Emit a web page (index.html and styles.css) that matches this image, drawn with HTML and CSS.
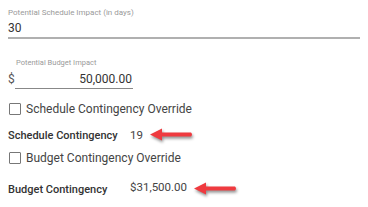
FILE: index.html
```html
<!DOCTYPE html>
<html lang="en">
<head>
  <meta charset="UTF-8" />
  <title>Contingency</title>
  <link rel="stylesheet" href="styles.css">
</head>
<body>
  <div class="form">
    <div class="field wide">
      <label>Potential Schedule Impact (in days)</label>
      <div class="value">30</div>
    </div>

    <div class="field money">
      <label>Potential Budget Impact</label>
      <div class="money-row">
        <span class="prefix">$</span>
        <div class="value right">50,000.00</div>
      </div>
    </div>

    <div class="check first"><span class="box"></span>Schedule Contingency Override</div>

    <div class="stat">
      <span class="stat-label">Schedule Contingency</span>
      <span class="stat-value">19</span>
      <svg class="arrow" width="46" height="15" viewBox="0 0 46 15">
        <path d="M1 6.5 L13 0.5 L13 4.5 L42 4.5 Q44 6.5 42 8.5 L13 8.5 L13 12.5 Z" fill="#ef3a3f"/>
      </svg>
    </div>

    <div class="check"><span class="box"></span>Budget Contingency Override</div>

    <div class="stat last">
      <span class="stat-label">Budget Contingency</span>
      <span class="stat-value up">$31,500.00</span>
      <svg class="arrow" width="46" height="15" viewBox="0 0 46 15">
        <path d="M1 6.5 L13 0.5 L13 4.5 L42 4.5 Q44 6.5 42 8.5 L13 8.5 L13 12.5 Z" fill="#ef3a3f"/>
      </svg>
    </div>
  </div>
</body>
</html>
```

FILE: styles.css
```css
body {
  margin: 0;
  padding: 8px 8px 0 8px;
  background: #fff;
  font-family: Roboto, "Liberation Sans", sans-serif;
  color: #333;
}

.field label {
  display: block;
  font-size: 8px;
  color: #9a9a9a;
  line-height: 10px;
}

.field .value {
  font-size: 12px;
  line-height: 14px;
  color: #333;
  padding: 3px 0 3px;
  border-bottom: 1px solid #a8a8a8;
}

.wide .value {
  border-bottom: 2px solid #b0b0b0;
  padding-bottom: 2px;
}

.money {
  margin-top: 19px;
}

.money label {
  padding-left: 8px;
  font-size: 7.5px;
}

.money-row {
  display: flex;
  align-items: flex-end;
  margin-top: 1px;
}

.prefix {
  font-size: 12px;
  color: #555;
  width: 7px;
  padding-bottom: 3px;
}

.money-row .value {
  width: 117px;
  text-align: right;
  padding-right: 1px;
  border-bottom: 1px solid #888;
  padding-bottom: 2px;
}

.check {
  display: flex;
  align-items: center;
  font-size: 12px;
  color: #444;
  height: 14px;
}

.check.first {
  margin-top: 13px;
}

.box {
  width: 10px;
  height: 10px;
  border: 1px solid #777;
  border-radius: 1px;
  margin: 0 5px 0 1px;
}

.stat {
  display: flex;
  align-items: center;
  height: 14px;
  margin: 12px 0 9px;
}

.stat.last {
  margin-top: 17px;
}

.stat-label {
  width: 122px;
  font-size: 11px;
  font-weight: 500;
  color: #333;
}

.stat-value {
  font-size: 11.5px;
  color: #444;
}

.stat-value.up {
  position: relative;
  top: -2px;
}

.arrow {
  flex-shrink: 0;
  margin-left: 6px;
  filter: drop-shadow(1px 2px 1.5px rgba(0, 0, 0, 0.45));
}
```
